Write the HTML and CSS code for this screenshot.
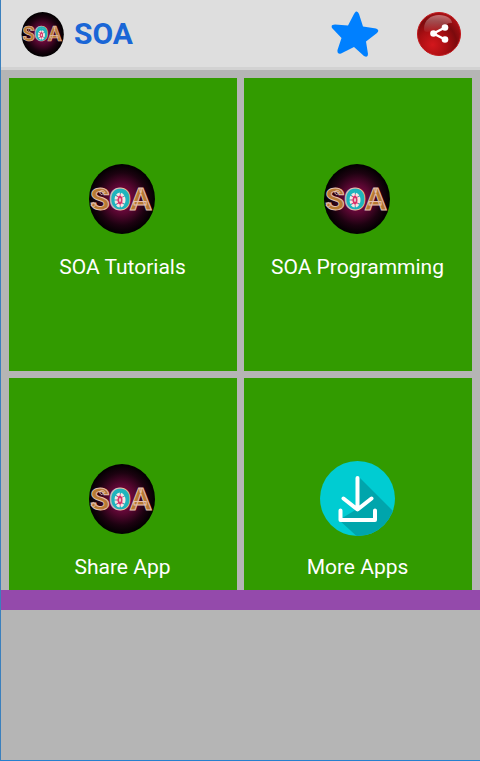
FILE: index.html
```html
<!DOCTYPE html>
<html lang="en">
<head>
  <meta charset="UTF-8">
  <meta name="viewport" content="width=device-width, initial-scale=1.0">
  <title>SOA</title>
  <link rel="stylesheet" href="styles.css">
</head>
<body>

  <!-- shared logo -->
  <svg class="defs" width="0" height="0" aria-hidden="true">
    <defs>
      <radialGradient id="logoGlow">
        <stop offset="0" stop-color="#8c0a4c"/>
        <stop offset="0.4" stop-color="#5c0733"/>
        <stop offset="0.75" stop-color="#1c0210"/>
        <stop offset="1" stop-color="#000"/>
      </radialGradient>
      <symbol id="logo" viewBox="0 0 75 75">
        <ellipse cx="37" cy="38" rx="33" ry="35" fill="url(#logoGlow)"/>
        <g class="logo-letters">
          <text x="5" y="49">S</text>
          <text class="logo-o" x="24" y="49">O</text>
          <text x="45" y="49">A</text>
        </g>
        <!-- curls of the S -->
        <path d="M20 32C19 28 14 29 15 32S19 33 18 31M6 44C7 47 11 46 10 43S6 42 7 44" fill="none" stroke="#e3bfae" stroke-width="1"/>
        <!-- flower inside the O -->
        <ellipse cx="35" cy="38" rx="8" ry="10" fill="#1fb4bd"/>
        <ellipse cx="35" cy="39" rx="4" ry="6" fill="#d8326a" stroke="#f6e6e4" stroke-width="3" stroke-dasharray="3 1"/>
        <ellipse cx="35" cy="39" rx="1" ry="2" fill="#e8d0c8"/>
      </symbol>
    </defs>
  </svg>

  <!-- Top bar -->
  <header class="topbar">
    <svg class="topbar-logo"><use href="#logo"/></svg>
    <h1>SOA</h1>
    <button class="icon-button rate" aria-label="Rate">
      <svg viewBox="0 0 48 48" width="48" height="48">
        <path d="M25 1.500Q27 1 28 4L32 16.500L45 18.500Q49 20 46 23L35 31.500L37 44Q37 48 33 46L23 37L10 43.500Q6 44.500 6.500 40L10.500 28L1 18Q-0.500 14.500 4 14.500L17 15.500L23 4Q24 2 25 1.500Z" fill="#0080ff"/>
      </svg>
    </button>
    <button class="icon-button" aria-label="Share">
      <svg viewBox="0 0 44 44" width="44" height="44">
        <defs>
          <radialGradient id="redBall" cx="0.35" cy="0.75" r="0.75">
            <stop offset="0" stop-color="#d3171c"/>
            <stop offset="0.45" stop-color="#a80e12"/>
            <stop offset="0.75" stop-color="#7c0a0d"/>
            <stop offset="1" stop-color="#a51014"/>
          </radialGradient>
          <linearGradient id="shine" x1="0" y1="0" x2="0" y2="1">
            <stop offset="0" stop-color="#fff" stop-opacity="0.4"/>
            <stop offset="1" stop-color="#fff" stop-opacity="0.05"/>
          </linearGradient>
        </defs>
        <circle cx="22" cy="22" r="21.500" fill="url(#redBall)" stroke="#c2171b"/>
        <path d="M7 17C7 8 14 3 22 3S35 7 35 11C28 10 26 18 16 19C11 20 7 21 7 17Z" fill="url(#shine)"/>
        <path d="M28 15.500L16.500 21.500L28 27.500" fill="none" stroke="#fff" stroke-width="2.500"/>
        <circle cx="28" cy="15.500" r="3.300" fill="#fff"/>
        <circle cx="16.500" cy="21.500" r="3.300" fill="#fff"/>
        <circle cx="28" cy="27.500" r="3.300" fill="#fff"/>
      </svg>
    </button>
  </header>

  <!-- Menu tiles -->
  <main class="menu">
    <a href="#" class="tile">
      <svg><use href="#logo"/></svg>
      <span>SOA Tutorials</span>
    </a>
    <a href="#" class="tile">
      <svg><use href="#logo"/></svg>
      <span>SOA Programming</span>
    </a>
    <a href="#" class="tile">
      <svg><use href="#logo"/></svg>
      <span>Share App</span>
    </a>
    <a href="#" class="tile">
      <svg viewBox="0 0 75 75">
        <defs>
          <clipPath id="disc"><circle cx="37.500" cy="37.500" r="37.500"/></clipPath>
        </defs>
        <g clip-path="url(#disc)">
          <rect width="75" height="75" fill="#00ccd2"/>
          <path d="M39 16L80 57V80H42L19 59L37 48Z" fill="#00a5ac"/>
        </g>
        <path d="M37.500 17V47M23.500 37.500L37.500 48.500L51.500 37.500M20.500 49.500V59H55V49.500" fill="none" stroke="#fff" stroke-width="4" stroke-linecap="round" stroke-linejoin="round"/>
      </svg>
      <span>More Apps</span>
    </a>
  </main>

  <div class="divider"></div>
  <footer class="ad-space"></footer>

</body>
</html>
```
FILE: styles.css
```css
* {
  box-sizing: border-box;
}

body {
  margin: 0;
  height: 100vh;
  display: flex;
  flex-direction: column;
  font-family: Roboto, "Liberation Sans", sans-serif;
  background: #b5b5b5;
  border-left: 1px solid #3b80bd;
  border-bottom: 1px solid #2580cf;
}

.defs {
  position: absolute;
}

/* Top bar */
.topbar {
  display: flex;
  align-items: center;
  flex-shrink: 0;
  height: 70px;
  padding: 0 19px 0 18px;
  background: #dedede;
  border-bottom: 3px solid #d2d2d2;
}

.topbar-logo {
  width: 48px;
  height: 48px;
}

.topbar h1 {
  margin: 0 0 0 7px;
  font-size: 30px;
  line-height: 36px;
  font-weight: bold;
  color: #1a66d6;
}

.icon-button {
  padding: 0;
  border: none;
  background: none;
  cursor: pointer;
}

.icon-button svg {
  display: block;
}

.rate {
  margin-left: auto;
  margin-right: 38px;
}

/* Menu tiles */
.menu {
  flex: 1;
  min-height: 0;
  display: grid;
  grid-template-columns: 1fr 1fr;
  grid-auto-rows: 293px;
  align-content: start;
  gap: 7px;
  padding: 8px 8px 0;
  overflow: hidden;
}

.tile {
  display: flex;
  flex-direction: column;
  align-items: center;
  justify-content: center;
  gap: 10px;
  padding-right: 1px;
  background: #329b00;
  color: #fff;
  font-size: 21px;
  line-height: 42px;
  text-decoration: none;
}

.tile svg {
  width: 75px;
  height: 75px;
}

.logo-letters {
  font-family: Roboto, sans-serif;
  font-size: 32px;
  font-weight: bold;
  fill: #b87a32;
  stroke: #e3bfae;
  stroke-width: 1px;
}

.logo-letters .logo-o {
  fill: #1fb4bd;
}

/* Bottom of the screen */
.divider {
  flex-shrink: 0;
  height: 20px;
  background: #944aab;
}

.ad-space {
  flex-shrink: 0;
  height: 150px;
}
```
